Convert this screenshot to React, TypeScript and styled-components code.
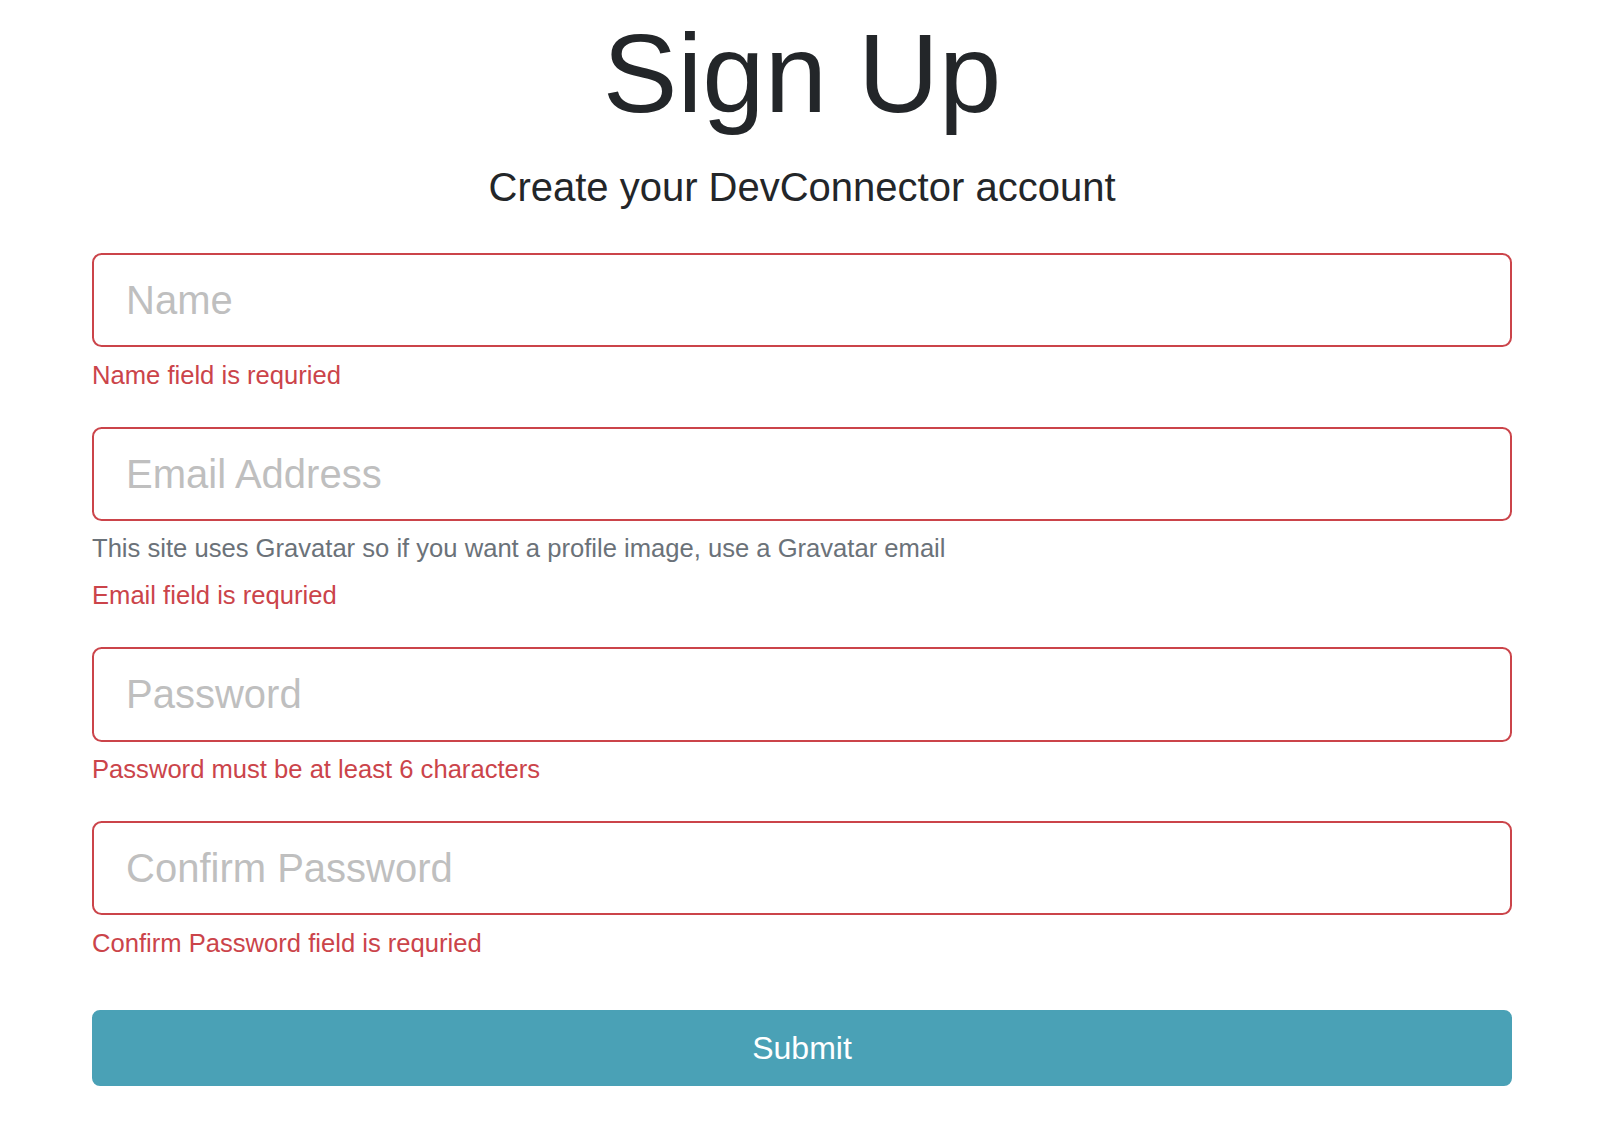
import styled, { createGlobalStyle } from "styled-components";

const GlobalStyle = createGlobalStyle`
    html, body {
        margin: 0;
        padding: 0;
        background: #fff;
    }
    body {
        font-family: "Helvetica Neue", "Liberation Sans", Arial, sans-serif;
        color: #232629;
    }
    * {
        box-sizing: border-box;
    }
`

const Page = styled.div`
    padding: 7px 104px 40px 92px;
`

const Register = styled.section`
    width: 1420px;
`

const Title = styled.h1`
    margin: 0 0 16px;
    font-size: 112px;
    font-weight: 300;
    line-height: 1.2;
    text-align: center;
    color: #232629;
`

const Lead = styled.p`
    margin: 0 0 35.5px;
    font-size: 40px;
    font-weight: 300;
    line-height: 1.5;
    text-align: center;
    color: #232629;
`

const Form = styled.form`
    display: flex;
    flex-direction: column;
`

const FormGroup = styled.div`
    display: flex;
    flex-direction: column;
    margin-bottom: 32.5px;
`

interface InputProps {
    $invalid?: boolean;
}

const Input = styled.input<InputProps>`
    width: 100%;
    height: 94.5px;
    padding: 0 32px;
    font-family: inherit;
    font-size: 40px;
    line-height: 1.5;
    color: #495057;
    background: #fff;
    border: 2px solid ${props => props.$invalid ? "#cb444a" : "#ced4da"};
    border-radius: 9.6px;
    outline: none;

    &::placeholder {
        color: #bfbfbf;
        opacity: 1;
    }
`

const HelpText = styled.small`
    display: block;
    margin-top: 8px;
    font-size: 25.6px;
    line-height: 1.5;
    color: #6b7279;
`

const Feedback = styled.div`
    margin-top: 8.5px;
    font-size: 25.6px;
    line-height: 1.5;
    color: #cb444a;
`

const SubmitButton = styled.button`
    width: 100%;
    height: 76px;
    margin-top: 15.5px;
    font-family: inherit;
    font-size: 32px;
    line-height: 1.5;
    color: #fff;
    background: #4aa1b6;
    border: 2px solid #4aa1b6;
    border-radius: 8px;
    cursor: pointer;
`

interface Field {
    name: string;
    type: string;
    placeholder: string;
    info?: string;
    error?: string;
}

const fields: Field[] = [
    { name: "name", type: "text", placeholder: "Name", error: "Name field is requried" },
    {
        name: "email",
        type: "email",
        placeholder: "Email Address",
        info: "This site uses Gravatar so if you want a profile image, use a Gravatar email",
        error: "Email field is requried",
    },
    { name: "password", type: "password", placeholder: "Password", error: "Password must be at least 6 characters" },
    { name: "password2", type: "password", placeholder: "Confirm Password", error: "Confirm Password field is requried" },
];

export default function App() {
    return <>
        <GlobalStyle />
        <Page>
            <Register>
                <Title>Sign Up</Title>
                <Lead>Create your DevConnector account</Lead>
                <Form noValidate onSubmit={e => e.preventDefault()}>
                    {fields.map(field => <FormGroup key={field.name}>
                        <Input
                            type={field.type}
                            name={field.name}
                            placeholder={field.placeholder}
                            $invalid={!!field.error} />
                        {field.info && <HelpText>{field.info}</HelpText>}
                        {field.error && <Feedback>{field.error}</Feedback>}
                    </FormGroup>)}
                    <SubmitButton type="submit">Submit</SubmitButton>
                </Form>
            </Register>
        </Page>
    </>;
}
